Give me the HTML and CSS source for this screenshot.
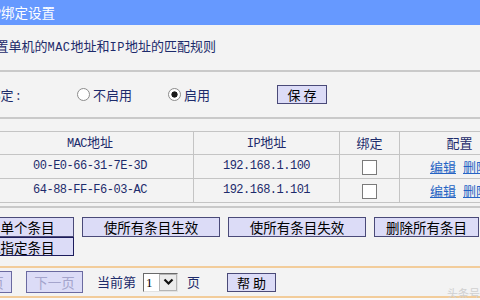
FILE: index.html
```html
<!DOCTYPE html>
<html lang="zh-CN">
<head>
  <meta charset="UTF-8" />
  <title>静态ARP绑定设置</title>
  <link rel="stylesheet" href="styles.css">
</head>
<body>
  <div class="page">
    <div class="title-bar">
      <div class="cut title-cut"><span>静态ARP绑定设置</span></div>
    </div>

    <div class="intro">
      <div class="cut intro-cut"><span>本页设置单机的<span class="en">MAC</span>地址和<span class="en">IP</span>地址的匹配规则</span></div>
    </div>

    <div class="bind-row">
      <div class="cut bind-label"><span>ARP绑定 :</span></div>
      <label class="radio radio-off"><input type="radio" name="arp">不启用</label>
      <label class="radio radio-on"><input type="radio" name="arp" checked>启用</label>
      <button class="btn btn-save">保 存</button>
    </div>

    <table class="bind-table">
      <colgroup>
        <col class="c-mac"><col class="c-ip"><col class="c-bind"><col class="c-cfg">
      </colgroup>
      <tr>
        <th><span class="en">MAC</span>地址</th>
        <th><span class="en">IP</span>地址</th>
        <th>绑定</th>
        <th>配置</th>
      </tr>
      <tr>
        <td class="en">00-E0-66-31-7E-3D</td>
        <td class="en">192.168.1.100</td>
        <td><input type="checkbox"></td>
        <td><a href="#">编辑</a><a href="#">删除</a></td>
      </tr>
      <tr>
        <td class="en">64-88-FF-F6-03-AC</td>
        <td class="en">192.168.1.101</td>
        <td><input type="checkbox"></td>
        <td><a href="#">编辑</a><a href="#">删除</a></td>
      </tr>
    </table>

    <div class="actions">
      <div class="action-row">
        <button class="btn btn-first">增加单个条目</button>
        <button class="btn btn-wide">使所有条目生效</button>
        <button class="btn btn-wide">使所有条目失效</button>
        <button class="btn btn-clear">删除所有条目</button>
      </div>
      <div class="action-row">
        <button class="btn btn-first btn-focus">查找指定条目</button>
      </div>
    </div>

    <div class="pager">
      <button class="btn btn-page btn-prev" disabled>上一页</button>
      <button class="btn btn-page btn-next" disabled>下一页</button>
      <span class="page-label">当前第</span>
      <div class="select">
        <span class="select-value">1</span>
        <span class="select-arrow">
          <svg width="11" height="8" viewBox="0 0 11 8"><polyline points="1.5,1.5 5.5,5.5 9.5,1.5" fill="none" stroke="#111" stroke-width="2.2"/></svg>
        </span>
      </div>
      <span class="page-unit">页</span>
      <button class="btn btn-help">帮 助</button>
      <span class="watermark">头条号</span>
    </div>
  </div>
</body>
</html>
```

FILE: styles.css
```css
html, body {
  margin: 0;
  overflow: hidden;
  background: #f9f9f9;
}
body {
  font: 13px/1.2 "Noto Sans CJK SC", sans-serif;
  color: #1d2b6b;
}
.page {
  position: relative;
  width: 480px;
  background: #f3f3f3;
}

/* text whose start is cut off by the left edge */
.cut {
  display: flex;
  justify-content: flex-end;
  white-space: nowrap;
}
.cut > span {
  flex: none;
}
.en {
  font-family: "Liberation Mono", monospace;
  font-size: 12px;
  letter-spacing: -0.5px;
}

.title-bar {
  height: 25px;
  line-height: 25px;
  background: #6699ff;
  color: #fff;
  font-size: 13.5px;
}
.title-cut {
  width: 55px;
}

.intro {
  padding: 11px 0 12px;
  line-height: 20px;
  border-bottom: 2px solid #c9c9c9;
}
.intro-cut {
  width: 216px;
}
.intro .en {
  letter-spacing: 0.5px;
}

.bind-row {
  display: flex;
  align-items: center;
  height: 45px;
  border-bottom: 2px solid #c9c9c9;
}
.bind-label {
  width: 20px;
}
.radio {
  display: flex;
  align-items: center;
  gap: 3px;
}
.radio input {
  appearance: none;
  width: 13px;
  height: 13px;
  margin: 0;
  border: 1px solid #8c8c8c;
  border-radius: 50%;
  background: #fff;
}
.radio input:checked {
  background: radial-gradient(circle, #1a1a1a 0 2.8px, #fff 3.4px);
}
.radio-off {
  margin-left: 57px;
}
.radio-on {
  margin-left: 36px;
}

.btn {
  box-sizing: border-box;
  height: 20px;
  padding: 0;
  border: 1px solid #4a4a78;
  background: #dcdcf7;
  color: #000;
  font: 13.5px/18px "Noto Sans CJK SC", sans-serif;
  white-space: nowrap;
}
.btn-save {
  width: 50px;
  height: 19px;
  margin-left: 67px;
  font-size: 13px;
}

.bind-table {
  width: 533px;
  margin: 12px 0 0 -14px;
  border-collapse: collapse;
  table-layout: fixed;
}
.c-mac { width: 207px; }
.c-ip { width: 146px; }
.c-bind { width: 60px; }
.c-cfg { width: 120px; }
.bind-table th,
.bind-table td {
  height: 23px;
  padding: 0;
  border: 1px solid #c4c4c4;
  text-align: center;
  font-weight: normal;
}
.bind-table th {
  height: 22px;
}
.bind-table input {
  appearance: none;
  box-sizing: border-box;
  width: 15px;
  height: 15px;
  margin: 0;
  border: 1px solid #7a7a7a;
  background: #fff;
  vertical-align: middle;
}
.bind-table a {
  color: #2563c4;
}
.bind-table a + a {
  margin-left: 7px;
}

.actions {
  margin-top: 3px;
  padding: 9px 0 10px;
  border-top: 2px solid #c9c9c9;
}
.action-row {
  display: flex;
  gap: 8px;
}
.btn-first {
  width: 120px;
  margin-left: -46px;
}
.btn-wide {
  width: 138px;
}
.btn-clear {
  width: 105px;
}
.action-row + .action-row .btn {
  height: 19px;
}
.btn-focus {
  border-color: #1c1c5c;
}

.pager {
  position: relative;
  display: flex;
  align-items: center;
  height: 28px;
  border-top: 2px solid #f2cc9a;
  border-bottom: 2px solid #f2cc9a;
}
.btn-page {
  width: 57px;
  height: 22px;
  color: #a4a4cc;
  border-color: #6a6aa0;
}
.btn-prev {
  margin-left: -45px;
}
.btn-next {
  margin-left: 14px;
}
.page-label {
  margin-left: 14px;
}
.select {
  display: flex;
  box-sizing: border-box;
  width: 35px;
  height: 19px;
  margin-left: 7px;
  border: 1px solid;
  border-color: #6a6a6a #e2e2e2 #e2e2e2 #6a6a6a;
  background: #fff;
}
.select-value {
  flex: 1;
  padding-left: 2px;
  font: 13px/17px "Liberation Serif", serif;
  color: #000;
}
.select-arrow {
  display: flex;
  align-items: center;
  justify-content: center;
  box-sizing: border-box;
  width: 18px;
  border: 1px solid #b4b4b4;
  background: #ececec;
}
.page-unit {
  margin-left: 9px;
}
.btn-help {
  width: 49px;
  height: 19px;
  margin-left: 27px;
  font-size: 13px;
}
.watermark {
  position: absolute;
  right: 0;
  bottom: -4px;
  font-size: 11px;
  color: #d0d0d0;
}
```
